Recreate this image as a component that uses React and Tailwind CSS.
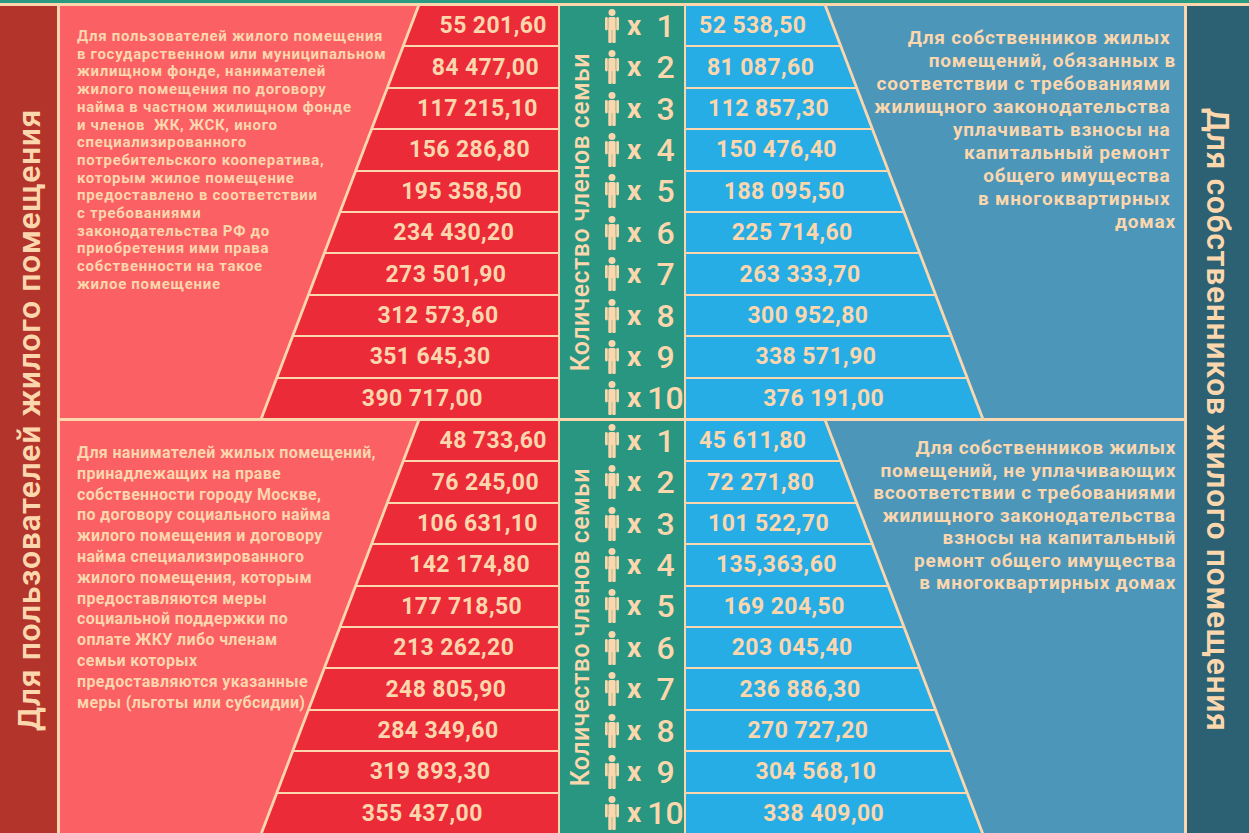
import React from "react";

const topRed = ["55 201,60", "84 477,00", "117 215,10", "156 286,80", "195 358,50", "234 430,20", "273 501,90", "312 573,60", "351 645,30", "390 717,00"];
const topBlue = ["52 538,50", "81 087,60", "112 857,30", "150 476,40", "188 095,50", "225 714,60", "263 333,70", "300 952,80", "338 571,90", "376 191,00"];
const botRed = ["48 733,60", "76 245,00", "106 631,10", "142 174,80", "177 718,50", "213 262,20", "248 805,90", "284 349,60", "319 893,30", "355 437,00"];
const botBlue = ["45 611,80", "72 271,80", "101 522,70", "135,363,60", "169 204,50", "203 045,40", "236 886,30", "270 727,20", "304 568,10", "338 409,00"];

const topLeftText = [
  "Для пользователей жилого помещения",
  "в государственном или муниципальном",
  "жилищном фонде, нанимателей",
  "жилого помещения по договору",
  "найма в частном жилищном фонде",
  "и членов  ЖК, ЖСК, иного",
  "специализированного",
  "потребительского кооператива,",
  "которым жилое помещение",
  "предоставлено в соответствии",
  "с требованиями",
  "законодательства РФ до",
  "приобретения ими права",
  "собственности на такое",
  "жилое помещение",
];

const botLeftText = [
  "Для нанимателей жилых помещений,",
  "принадлежащих на праве",
  "собственности городу Москве,",
  "по договору социального найма",
  "жилого помещения и договору",
  "найма специализированного",
  "жилого помещения, которым",
  "предоставляются меры",
  "социальной поддержки по",
  "оплате ЖКУ либо членам",
  "семьи которых",
  "предоставляются указанные",
  "меры (льготы или субсидии)",
];

const topRightText = [
  "Для собственников жилых\u00a0",
  "помещений, обязанных в",
  "соответствии с требованиями\u00a0",
  "жилищного законодательства\u00a0",
  "уплачивать взносы на\u00a0",
  "капитальный ремонт\u00a0",
  "общего имущества\u00a0",
  "в многоквартирных\u00a0",
  "домах",
];

const botRightText = [
  "Для собственников жилых",
  "помещений, не уплачивающих",
  "всоответствии с требованиями",
  "жилищного законодательства",
  "взносы на капитальный",
  "ремонт общего имущества",
  "в многоквартирных домах",
];

function Person() {
  return (
    <svg width="14" height="34" viewBox="0 0 14 34" className="shrink-0">
      <g fill="#fcd7ad">
        <circle cx="7" cy="3.6" r="3.5" />
        <rect x="0" y="8" width="2.8" height="13.5" rx="1.4" />
        <rect x="11.2" y="8" width="2.8" height="13.5" rx="1.4" />
        <rect x="3.3" y="8" width="7.4" height="13" rx="1.6" />
        <rect x="3.3" y="19" width="3.5" height="15" rx="1" />
        <rect x="7.2" y="19" width="3.5" height="15" rx="1" />
      </g>
    </svg>
  );
}

function Lines({ lines, className }) {
  return (
    <div className={className}>
      {lines.map((l) => (
        <div key={l} className="whitespace-pre">{l}</div>
      ))}
    </div>
  );
}

function RedSide({ values, text, textClass }) {
  return (
    <div className="grid w-[498px] grid-cols-1 grid-rows-1 bg-[#fb6064]">
      <Lines lines={text} className={"col-start-1 row-start-1 font-bold text-[#fcd7ad] " + textClass} />
      <div className="col-start-1 row-start-1 h-full bg-[#fcd7ad] [clip-path:polygon(357px_0,100%_0,100%_100%,200px_100%)]">
        <div className="flex h-full flex-col gap-[2px] [clip-path:polygon(360px_0,100%_0,100%_100%,203px_100%)]">
          {values.map((v, i) => {
            const mid = i * 41.4 + 19.7;
            const left = 360 - 0.381 * mid;
            return (
              <div key={v} className="flex flex-1 items-center bg-[#ec2b39] text-[23px] font-bold leading-none tracking-[0.4px] text-[#fcd7ad]" style={{ paddingLeft: left + 16 }}>
                <span className="flex-1 text-center">{v}</span>
              </div>
            );
          })}
        </div>
      </div>
    </div>
  );
}

function BlueSide({ values, text, textClass }) {
  return (
    <div className="grid w-[498px] grid-cols-1 grid-rows-1 bg-[#4c96ba]">
      <Lines lines={text} className={"col-start-1 row-start-1 justify-self-end text-right font-bold text-[#fcd7ad] " + textClass} />
      <div className="col-start-1 row-start-1 h-full bg-[#fcd7ad] [clip-path:polygon(0_0,141px_0,298px_100%,0_100%)]">
        <div className="flex h-full flex-col gap-[2px] [clip-path:polygon(0_0,138px_0,295px_100%,0_100%)]">
          {values.map((v, i) => {
            const mid = i * 41.4 + 19.7;
            const right = 138 + 0.381 * mid;
            return (
              <div key={v} className="flex flex-1 items-center bg-[#26ade6] text-[23px] font-bold leading-none tracking-[0.4px] text-[#fcd7ad]" style={{ paddingRight: 498 - right + 12 }}>
                <span className="flex-1 text-center">{v}</span>
              </div>
            );
          })}
        </div>
      </div>
    </div>
  );
}

function Members() {
  return (
    <div className="flex w-[128px] border-x-2 border-[#fcd7ad] bg-[#289680] text-[#fcd7ad]">
      <div className="flex w-[40px] items-center justify-center">
        <span className="rotate-180 whitespace-nowrap text-[25px] font-medium leading-none tracking-[0.4px] [writing-mode:vertical-rl]">
          Количество членов семьи
        </span>
      </div>
      <div className="flex flex-1 flex-col gap-[2px]">
        {Array.from({ length: 10 }, (_, i) => (
          <div key={i} className="flex flex-1 items-center pl-[5px]">
            <Person />
            <span className="ml-[8px] w-[20px] text-[28px] font-bold leading-none">x</span>
            <span className="w-[37px] text-center text-[32px] font-medium leading-none">{i + 1}</span>
          </div>
        ))}
      </div>
    </div>
  );
}

export default function App() {
  return (
    <div className="h-[833px] w-[1249px] overflow-hidden bg-[#289680] font-[Roboto,'Open_Sans',sans-serif]">
      <div className="h-[3px] bg-[#2a9a80]" />
      <div className="h-[3px] bg-[#fcd7ad]" />
      <div className="flex h-[827px]">
        <div className="flex w-[60px] items-center justify-center border-r-[3px] border-[#fcd7ad] bg-[#b3342a]">
          <span className="rotate-180 whitespace-nowrap text-[32px] font-semibold leading-none tracking-[0.6px] text-[#fcd7ad] [writing-mode:vertical-rl]">
            Для пользователей жилого помещения
          </span>
        </div>
        <div className="flex w-[1124px] flex-col">
          <div className="flex h-[412px]">
            <RedSide values={topRed} text={topLeftText} textClass="pl-[17px] pt-[22px] text-[15px] leading-[17.7px] tracking-[0.7px]" />
            <Members />
            <BlueSide values={topBlue} text={topRightText} textClass="pr-[8px] pt-[20px] text-[19px] leading-[23px] tracking-[0.8px]" />
          </div>
          <div className="h-[3px] bg-[#fcd7ad]" />
          <div className="flex h-[412px]">
            <RedSide values={botRed} text={botLeftText} textClass="pl-[17px] pt-[22px] text-[16px] leading-[20.8px] tracking-[0.35px]" />
            <Members />
            <BlueSide values={botBlue} text={botRightText} textClass="pr-[8px] pt-[16px] text-[19px] leading-[22.5px] tracking-[0.7px]" />
          </div>
        </div>
        <div className="flex w-[65px] items-center justify-center border-l-[3px] border-[#fcd7ad] bg-[#2c6173]">
          <span className="whitespace-nowrap text-[32px] font-semibold leading-none tracking-[0.6px] text-[#fcd7ad] [writing-mode:vertical-rl]">
            Для собственников жилого помещения
          </span>
        </div>
      </div>
    </div>
  );
}
